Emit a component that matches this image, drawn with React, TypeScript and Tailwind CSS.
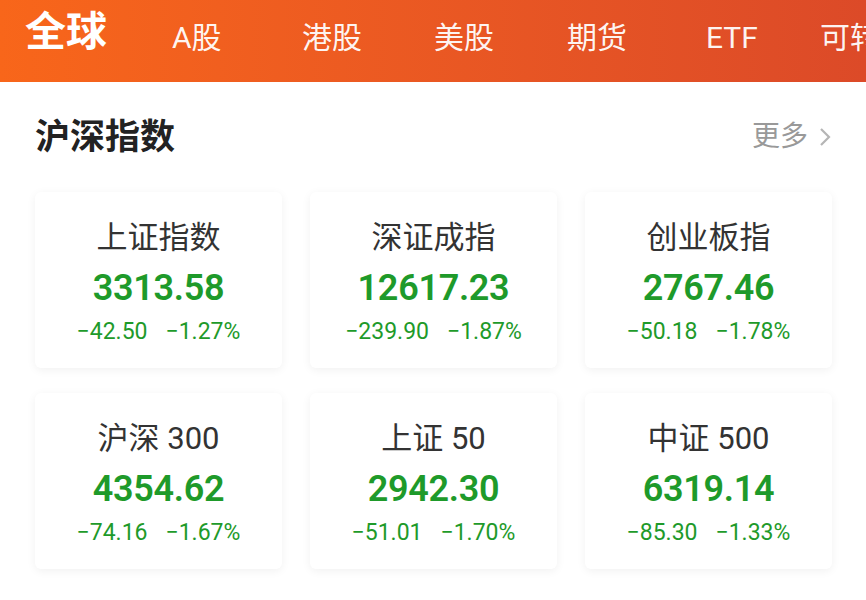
import React from "react";

const font = { fontFamily: 'Roboto, "Noto Sans CJK SC", sans-serif' };

const tabs = [
  { label: "A股", w: "w-[130px]" },
  { label: "港股", w: "w-[132px]" },
  { label: "美股", w: "w-[133px]" },
  { label: "期货", w: "w-[139px]" },
  { label: "ETF", w: "w-[114px]" },
  { label: "可转债", w: "w-[120px]" },
];

const cards = [
  { name: "上证指数", value: "3313.58", chg: "-42.50", pct: "-1.27%" },
  { name: "深证成指", value: "12617.23", chg: "-239.90", pct: "-1.87%" },
  { name: "创业板指", value: "2767.46", chg: "-50.18", pct: "-1.78%" },
  { name: "沪深 300", value: "4354.62", chg: "-74.16", pct: "-1.67%" },
  { name: "上证 50", value: "2942.30", chg: "-51.01", pct: "-1.70%" },
  { name: "中证 500", value: "6319.14", chg: "-85.30", pct: "-1.33%" },
];

export default function App() {
  return (
    <div
      className="w-[866px] h-[600px] overflow-hidden bg-white"
      style={font}
    >
      <div className="h-[82px] bg-gradient-to-r from-[#f8661a] to-[#dc4a28] flex items-start pl-[25px] whitespace-nowrap overflow-hidden">
        <div className="text-[41px] font-bold text-white leading-none mt-[12px] w-[147px] shrink-0">
          全球
        </div>
        {tabs.map((t) => (
          <div
            key={t.label}
            className={`${t.w} shrink-0 text-[30px] text-white/95 leading-none mt-[23px]`}
          >
            {t.label}
          </div>
        ))}
      </div>

      <div className="flex items-center justify-between pl-[35px] pr-[34px] h-[110px]">
        <div className="text-[35px] font-bold text-[#222] leading-none">
          沪深指数
        </div>
        <div className="flex items-center text-[#999] text-[28px] leading-none">
          <span>更多</span>
          <svg
            width="14"
            height="22"
            viewBox="0 0 14 22"
            className="ml-[10px]"
            fill="none"
            stroke="#b5b5b5"
            strokeWidth="2.2"
          >
            <path d="M3 3 L11 11 L3 19" />
          </svg>
        </div>
      </div>

      <div className="grid grid-cols-3 gap-x-[28px] gap-y-[25px] pl-[35px] pr-[34px]">
        {cards.map((c) => (
          <div
            key={c.name}
            className="h-[176px] bg-white rounded-[6px] shadow-[0_2px_10px_rgba(0,0,0,0.06)] flex flex-col items-center pt-[30px]"
          >
            <div className="text-[31px] text-[#333] leading-none whitespace-pre">{c.name}</div>
            <div className="text-[36px] font-semibold text-[#1e9a2a] leading-none mt-[17px] tracking-[-0.3px]">
              {c.value}
            </div>
            <div className="text-[23px] text-[#1e9a2a] leading-none mt-[14px] flex gap-[18px]">
              <span>{c.chg.replace("-", "−")}</span>
              <span>{c.pct.replace("-", "−")}</span>
            </div>
          </div>
        ))}
      </div>
    </div>
  );
}
